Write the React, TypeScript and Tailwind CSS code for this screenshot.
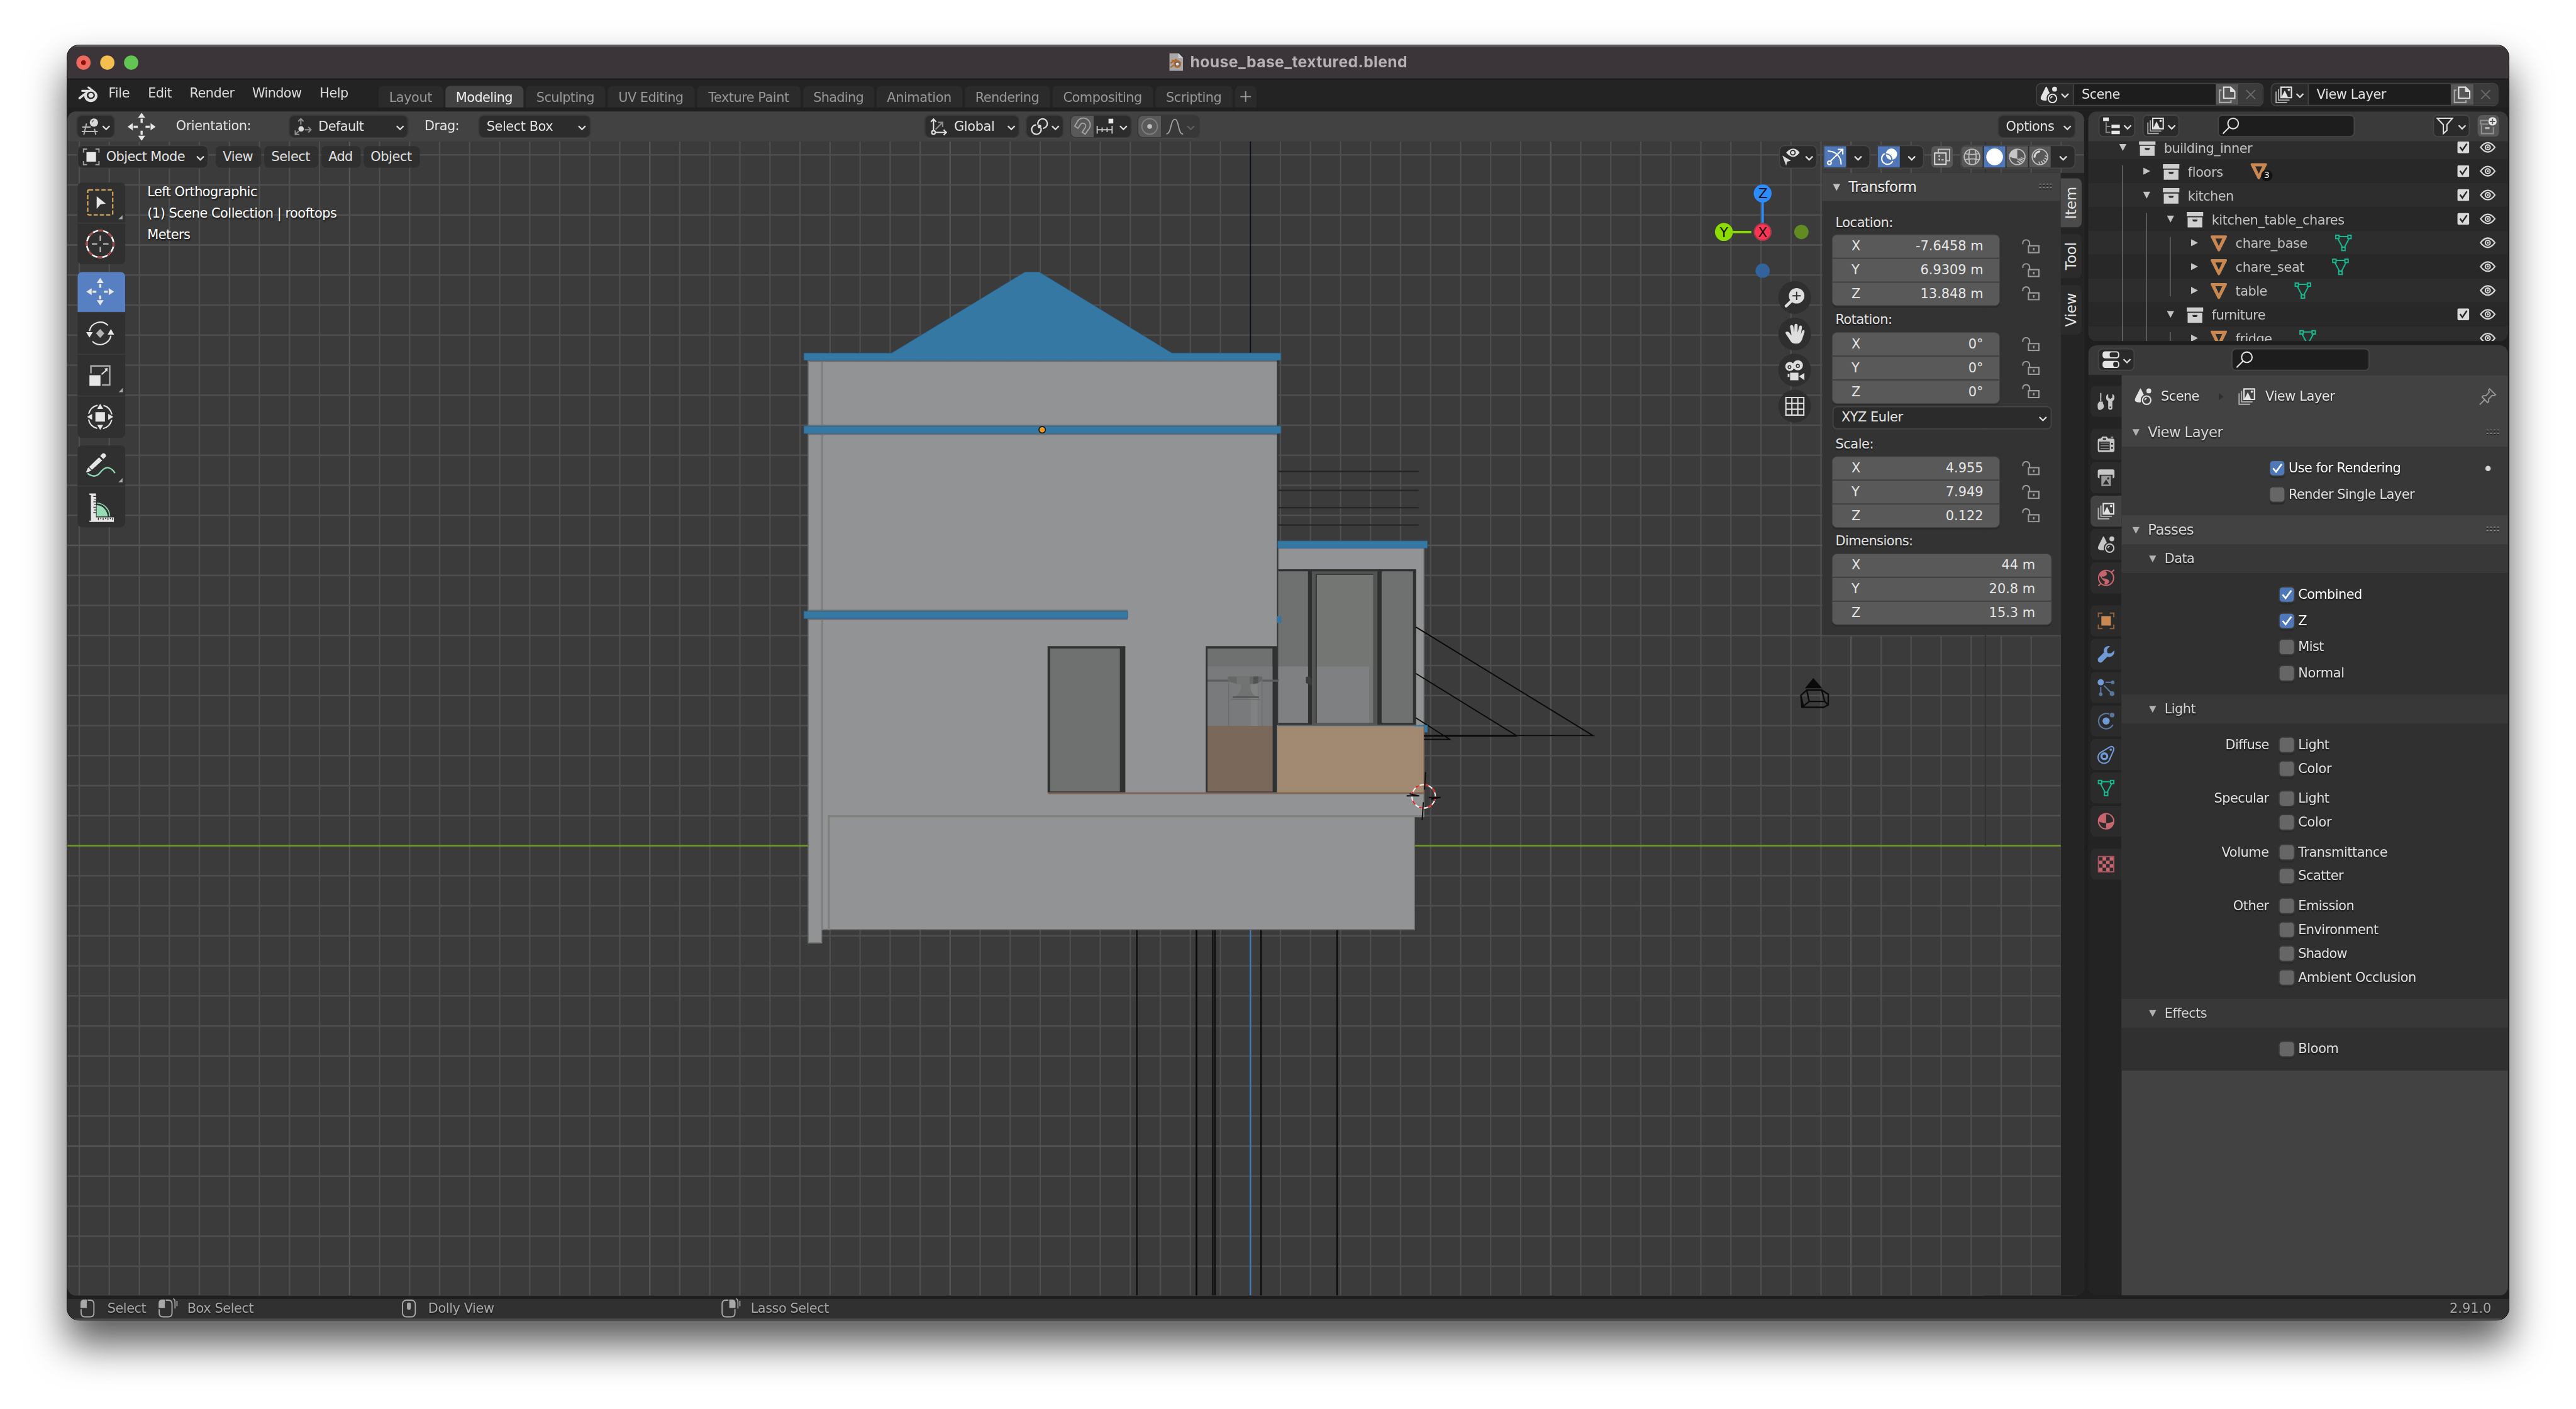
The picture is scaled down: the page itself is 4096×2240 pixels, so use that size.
import React from "react";
import { SiBlender } from "react-icons/si";

/* ---------- text ---------- */

// Glyph advances of the UI face in 1/1000 em; the interface lays glyphs out on whole pixels.
const ADV: Record<string, number> = {
  a: 613, b: 635, c: 550, d: 635, e: 615, f: 352, g: 635, h: 634, i: 278, j: 278, k: 579, l: 278, m: 974,
  n: 634, o: 612, p: 635, q: 635, r: 411, s: 521, t: 392, u: 634, v: 592, w: 818, x: 592, y: 592, z: 525,
  A: 684, B: 686, C: 698, D: 770, E: 632, F: 575, G: 775, H: 752, I: 295, L: 557, M: 863, N: 748, O: 787,
  P: 603, R: 695, S: 635, T: 611, U: 732, V: 684, W: 989, X: 685, Y: 611, Z: 685, " ": 318, _: 500, ":": 337,
};

function Txt({ children, size = 22, className = "" }: { children: string; size?: number; className?: string }) {
  let diff = 0;
  for (const ch of children) {
    const w = ((ADV[ch] ?? 0) * size) / 1000;
    diff += w - Math.floor(w);
  }
  return (
    <span
      className={"whitespace-pre leading-none " + (size === 24 ? "text-[24px] " : "text-[22px] ") + className}
      style={{ letterSpacing: -diff / children.length }}
    >
      {children}
    </span>
  );
}

/* ---------- icons ---------- */

type P = { className?: string };

const Ico = ({ children, c = "#d9d9d9", className = "h-[28px] w-[28px]" }: { children: React.ReactNode; c?: string; className?: string }) => (
  <svg viewBox="0 0 28 28" className={"shrink-0 overflow-visible " + className} fill={c} stroke="none" color={c}>
    {children}
  </svg>
);

const Chevron = ({ className = "", c = "#e0e0e0" }: P & { c?: string }) => (
  <svg viewBox="0 0 14 9" className={"h-[9px] w-[14px] shrink-0 " + className} fill="none" stroke={c} strokeWidth="2.4">
    <path d="M1.2 1.2 7 7 12.8 1.2" />
  </svg>
);

const SceneIcon = ({ c = "#e3e3e3" }) => (
  <Ico c={c}>
    <path d="M8.6 1.2 Q9.6 -.4 10.6 1.2 L15.3 11.2 A10 10 0 0 0 10.4 21.5 Q10.4 23 10 23.6 Q0 24 .2 19.5 Q.4 18 1.4 15.6Z" />
    <circle cx="23.6" cy="4.4" r="4.1" />
    <circle cx="20" cy="20" r="7" fill="none" stroke={c} strokeWidth="2.2" />
    <path d="M17 20a3.2 3.2 0 0 1 3-3" fill="none" stroke={c} strokeWidth="1.8" />
  </Ico>
);

const LayerIcon = ({ c = "#e3e3e3" }) => (
  <Ico c={c}>
    <path d="M9.2 1.2H26.8V18.8H9.2Z" fill="none" stroke={c} strokeWidth="2.2" />
    <path d="M10 18 L15.6 6.5 L21 18Z" />
    <circle cx="22.4" cy="5.6" r="2" />
    <path d="M5.2 4.6V22.8H23.6M1 8.4V26.9H19.4" fill="none" stroke={c} strokeOpacity=".7" strokeWidth="2" />
  </Ico>
);

const CollectionIcon = () => (
  <Ico c="#cfcfcf">
    <path d="M.2 1.4H27.8V8.6H.2Z" />
    <path fillRule="evenodd" d="M1.7 10.5H26.3V27.4H1.7ZM9.8 14.2Q9.8 17.6 12 17.6H16Q18.2 17.6 18.2 14.2Z" />
  </Ico>
);

const ObjMesh = () => (
  <Ico c="#c98852">
    <path fillRule="evenodd" d="M1.5 .6H26.5Q28 1 27.7 3L16 26.2Q14 29 12 26.2L.3 3Q0 1 1.5 .6ZM8.2 6L14 18.4L19.8 6Z" />
  </Ico>
);

const MeshData = () => (
  <Ico c="#16b890">
    <g fill="none" stroke="#16b890" strokeWidth="2.1">
      <path d="M1.1 1.5H6.6V7H1.1ZM21.4 1.5H26.9V7H21.4ZM11.2 21.5H16.8V27H11.2ZM7 3.6H21M4.8 7.5L12 21M23.2 7.5L16 21" />
    </g>
  </Ico>
);

const EyeIcon = () => (
  <Ico c="#d5d5d5" className="h-[26px] w-[26px]">
    <path d="M1.2 14Q7 5.6 14 5.6T26.8 14Q21 22.4 14 22.4T1.2 14Z" fill="none" stroke="#d5d5d5" strokeWidth="2.6" />
    <circle cx="14" cy="14" r="4.4" fill="none" stroke="#d5d5d5" strokeWidth="2.4" />
    <circle cx="14" cy="14" r="2" />
  </Ico>
);

const CopyIcon = () => (
  <Ico c="#e0e0e0">
    <path d="M8.2 1.2H19.8L26.8 8.2V19.8H8.2Z" fill="none" stroke="#e0e0e0" strokeWidth="2.2" />
    <path d="M19 1V9H27Z" />
    <path d="M4.6 6.2H1.2V26.8H20.4V23" fill="none" stroke="#a8a8a8" strokeWidth="2.2" />
  </Ico>
);

const SearchIcon = () => (
  <Ico c="#e0e0e0">
    <circle cx="18" cy="10" r="8.8" fill="none" stroke="#e0e0e0" strokeWidth="2.2" />
    <path d="M11.6 16.4L.8 27.2" stroke="#e0e0e0" strokeWidth="2.2" />
  </Ico>
);

const Lock = () => (
  <svg viewBox="0 0 30 24" className="h-[24px] w-[30px] shrink-0" fill="none" stroke="#9b9b9b" strokeWidth="2.2">
    <path d="M1.2 8.4V6.4A5.6 5.2 0 0 1 12.6 6.4V10.6" />
    <path d="M10.8 11.1H28.3V22.6H10.8Z" />
    <path d="M19.6 14.6V19" strokeWidth="2.6" />
  </svg>
);

const Grip = () => (
  <svg viewBox="0 0 22 11" className="h-[11px] w-[22px] shrink-0">
    {[0, 1, 2, 3].map((i) => (
      <g key={i}>
        <path d={`M${1 + i * 6} 0h3v3h-3zM${1 + i * 6} 6h3v3h-3z`} fill="#9a9a9a" />
        <path d={`M${1 + i * 6} 1.6h3v2h-3zM${1 + i * 6} 7.6h3v2h-3z`} fill="#1a1a1a" />
      </g>
    ))}
  </svg>
);

const TriDown = ({ c = "#b0b0b0" }) => (
  <svg viewBox="0 0 12 12" className="h-[12px] w-[12px] shrink-0"><path d="M0 .5H12L6 12Z" fill={c} /></svg>
);
const TriRight = ({ c = "#c0c0c0" }) => (
  <svg viewBox="0 0 12 12" className="h-[12px] w-[12px] shrink-0"><path d="M.5 0V12L12 6Z" fill={c} /></svg>
);

/* ---------- shared widgets ---------- */

const dd = "flex h-[36px] shrink-0 items-center rounded-[8px] bg-[#2c2c2c] text-[#e4e4e4] shadow-[0_0_0_2px_#3a3a3a,0_3px_1px_#4c4c4c]";
const ddv = "flex h-[36px] shrink-0 items-center text-[#e4e4e4] bg-[#2b2b2b]";

/* ---------- title and top bar ---------- */

function TitleBar() {
  return (
    <div className="flex h-[56px] shrink-0 items-center border-t-2 border-[#6d696c] bg-[#3b3539]">
      <div className="ml-[15px] flex w-[1833px] gap-[16px]">
        <div className="flex h-[24px] w-[24px] items-center justify-center rounded-full bg-[#ee6a5e]">
          <div className="h-[8px] w-[8px] rounded-full bg-[#8b1009]" />
        </div>
        <div className="h-[24px] w-[24px] rounded-full bg-[#f5bf4f]" />
        <div className="h-[24px] w-[24px] rounded-full bg-[#62c554]" />
      </div>
      <svg viewBox="0 0 23 30" className="mr-[12px] mb-[3px] h-[30px] w-[23px]">
        <path d="M0 0H15L23 8V30H0Z" fill="#a9a7a8" />
        <path d="M15 0V8H23Z" fill="#d0cfcf" />
        <circle cx="13.5" cy="18.5" r="5" fill="#3d5a8a" stroke="#b06a2c" strokeWidth="3" />
        <circle cx="13.5" cy="18.5" r="2.6" fill="#e8e8e8" />
        <path d="M2 17L12 10M4 12.5H14M2 24L9 19" stroke="#b06a2c" strokeWidth="2.4" />
      </svg>
      <span className="mb-[3px] font-[Inter] text-[26px] leading-none font-bold tracking-[0.45px] text-[#b5b1b4]">house_base_textured.blend</span>
    </div>
  );
}

const TABS: [string, string][] = [
  ["Layout", "w-[108px]"], ["Modeling", "w-[131px]"], ["Sculpting", "w-[133px]"], ["UV Editing", "w-[146px]"],
  ["Texture Paint", "w-[174px]"], ["Shading", "w-[119px]"], ["Animation", "w-[144px]"], ["Rendering", "w-[143px]"],
  ["Compositing", "w-[169px]"], ["Scripting", "w-[129px]"],
];

function IdField({ icon, label }: { icon: React.ReactNode; label: string }) {
  return (
    <div className="flex h-[39px] w-[382px] items-stretch overflow-hidden rounded-[9px] border-2 border-[#414141] bg-[#1d1d1d]">
      <div className="flex w-[62px] items-center border-r-2 border-[#414141] bg-[#2a2a2a] pl-[6px]">
        {icon}
        <Chevron className="mt-[4px] ml-[6px]" />
      </div>
      <div className="flex w-[238px] items-center pl-[13px] text-[#e4e4e4]"><Txt>{label}</Txt></div>
      <div className="flex w-[38px] items-center justify-center bg-[#575757]"><CopyIcon /></div>
      <div className="flex flex-1 items-center justify-center bg-[#3b3b3b]">
        <svg viewBox="0 0 18 18" className="h-[17px] w-[17px]" stroke="#6b6b6b" strokeWidth="2"><path d="M1 1L17 17M17 1L1 17" /></svg>
      </div>
    </div>
  );
}

function TopBar() {
  return (
    <div className="flex h-[54px] shrink-0 border-b-[7px] border-[#1f1f1f] bg-[#232323]">
      <div className="flex h-[50px] items-center text-[#dcdcdc]">
        <SiBlender className="mr-[18px] ml-[18px] h-[32px] w-[33px] text-[#e0e0e0]" />
        <div className="w-[66px]"><Txt>File</Txt></div>
        <div className="w-[70px]"><Txt>Edit</Txt></div>
        <div className="w-[105px]"><Txt>Render</Txt></div>
        <div className="w-[113px]"><Txt>Window</Txt></div>
        <div className="w-[99px]"><Txt>Help</Txt></div>
      </div>
      <div className="mt-[11px] flex gap-[4px]">
        {TABS.map(([t, w]) => (
          <div
            key={t}
            className={
              "flex h-[36px] items-center justify-center rounded-t-[8px] pt-[3px] pr-[1px] " + w +
              (t === "Modeling" ? " bg-[#424242] text-[#f2f2f2]" : " bg-[#2b2b2b] text-[#989898]")
            }
          >
            <Txt>{t}</Txt>
          </div>
        ))}
        <div className="flex h-[36px] w-[36px] items-center justify-center rounded-t-[8px] bg-[#2b2b2b]">
          <svg viewBox="0 0 18 18" className="h-[18px] w-[18px]" stroke="#989898" strokeWidth="2"><path d="M9 0V18M0 9H18" /></svg>
        </div>
      </div>
      <div className="mt-[6px] mr-[17px] ml-auto flex gap-[12px]">
        <IdField icon={<SceneIcon />} label="Scene" />
        <IdField icon={<LayerIcon />} label="View Layer" />
      </div>
    </div>
  );
}

/* ---------- 3D viewport ---------- */

function ToolHeader() {
  return (
    <div className="flex h-[50px] shrink-0 items-center rounded-t-[14px] bg-[#424242] text-[#e4e4e4]">
      <div className={dd + " ml-[17px] w-[61px] pl-[7px]"}>
        <Ico>
          <g fill="none" stroke="#b9b9b9" strokeWidth="2">
            <path d="M1 15H15M0 22.5H27M8 9L3.6 28M21.4 18L23.6 28" />
          </g>
          <circle cx="20.5" cy="7.5" r="7" />
          <path d="M17.4 7A3.4 3.4 0 0 1 20 4" stroke="#555" strokeWidth="1.6" fill="none" />
        </Ico>
        <Chevron className="mt-[4px] ml-[6px]" />
      </div>
      <svg viewBox="-23.5 -23.5 47 47" className="ml-[23px] h-[47px] w-[47px]" fill="#e6e6e6">
        {[0, 90, 180, 270].map((a) => (
          <path key={a} transform={`rotate(${a})`} d="M23.5 0L15 -6V6ZM13.5 -1.8H6.5V1.8H13.5Z" />
        ))}
      </svg>
      <div className="ml-[34px] w-[191px]"><Txt>Orientation:</Txt></div>
      <div className={dd + " w-[197px] pl-[8px]"}>
        <Ico>
          <circle cx="11" cy="18" r="4.6" />
          <g fill="none" stroke="#8f8f8f" strokeWidth="2.2"><path d="M10.5 1V11M6 5.5L10.5 1L15 5.5M17 19.5H27.5M23 15L27.5 19.5L23 24M7 22L1.6 27M1.2 20.5V27.4H8" /></g>
        </Ico>
        <Txt className="ml-[12px]">Default</Txt>
        <Chevron className="mt-[4px] mr-[5px] ml-auto" />
      </div>
      <div className="ml-[29px] w-[92px]"><Txt>Drag:</Txt></div>
      <div className={dd + " w-[185px] pl-[12px]"}>
        <Txt>Select Box</Txt>
        <Chevron className="mt-[4px] mr-[6px] ml-auto" />
      </div>

      <div className={dd + " ml-[563px] w-[156px] pl-[8px]"}>
        <Ico>
          <g fill="none" stroke="#e0e0e0" strokeWidth="2.2">
            <path d="M5.5 22V2M1 6.5L5.5 1.6L10 6.5M8 24H27M22.5 19.5L27 24L22.5 28.5" />
            <circle cx="5.5" cy="24" r="3" />
            <path d="M9 19L20 8M13 7.2H20.8V15" stroke="#8f8f8f" />
          </g>
        </Ico>
        <Txt className="ml-[12px]">Global</Txt>
        <Chevron className="mt-[4px] mr-[5px] ml-auto" />
      </div>
      <div className={dd + " ml-[14px] w-[60px] pl-[7px]"}>
        <Ico>
          <g fill="none" stroke="#e0e0e0" strokeWidth="2.3">
            <path d="M11.6 11A8 8 0 1 1 20 17.2" />
            <path d="M16.6 16.5A8 8 0 1 1 8.6 11.2" />
          </g>
          <circle cx="14.2" cy="14" r="3" />
        </Ico>
        <Chevron className="mt-[4px] ml-[6px]" />
      </div>
      <div className={dd + " ml-[14px] w-[100px] overflow-hidden"}>
        <div className="flex h-[36px] w-[38px] items-center justify-center bg-[#595959]">
          <Ico>
            <path d="M1.2 13.5L5 7.500A11.500 11.500 0 1 1 24 19.500L18.800 27L13.800 23.600L19 15.800A4.600 4.600 0 1 0 11 10.800L6.800 17.200Z" fill="none" stroke="#a2a2a2" strokeWidth="2" />
          </Ico>
        </div>
        <Ico className="ml-[5px] h-[28px] w-[28px]">
          <path d="M20 1H28V9H20Z" fill="#e6e6e6" />
          <path d="M1 13V26M26 13V26M1 19.5H26M9.3 15.5V23.5M17.6 15.5V23.5" stroke="#c4c4c4" strokeWidth="2" />
        </Ico>
        <Chevron className="mt-[4px] ml-[10px]" />
      </div>
      <div className={dd + " ml-[13px] w-[101px] overflow-hidden"}>
        <div className="flex h-[36px] w-[38px] items-center justify-center bg-[#595959]">
          <Ico>
            <circle cx="14" cy="14" r="13" fill="none" stroke="#7d7d7d" strokeWidth="2" />
            <circle cx="14" cy="14" r="4" fill="#c0c0c0" />
          </Ico>
        </div>
        <div className="flex h-full flex-1 items-center bg-[#383838] pl-[9px]">
          <Ico><path d="M0 26.5Q5 26.5 7.5 14.5T14 2T20.5 14.5T28 26.5" fill="none" stroke="#a0a0a0" strokeWidth="2" /></Ico>
          <Chevron className="mt-[4px] ml-[6px]" c="#5e5e5e" />
        </div>
      </div>
      <div className={dd + " mr-[16px] ml-auto w-[127px] pl-[12px]"}>
        <Txt>Options</Txt>
        <Chevron className="mt-[4px] mr-[5px] ml-auto" />
      </div>
    </div>
  );
}

const OX = 2097, OY = 1418, STEP = 50.36;

function SceneDrawing() {
  const lines: React.ReactNode[] = [];
  for (let k = -39; k <= 27; k++) {
    if (k === 0) continue;
    lines.push(<path key={"v" + k} d={`M${OX + k * STEP} 237V2172`} stroke={k % 10 === 0 ? "#555555" : "#4e4e4e"} />);
  }
  for (let k = -23; k <= 14; k++) {
    if (k === 0) continue;
    lines.push(<path key={"h" + k} d={`M113 ${OY + k * STEP}H3495`} stroke={k % 10 === 0 ? "#555555" : "#4e4e4e"} />);
  }
  return (
    <svg viewBox="113 237 3382 1935" className="absolute inset-0 h-full w-full">
      <rect x="113" y="237" width="3382" height="1935" fill="#3b3b3b" />
      <g strokeWidth="2.5">{lines}</g>
      <path d="M113 1418H3495" stroke="#6f9a25" strokeWidth="2.8" />
      <path d="M3329.5 237V1418" stroke="#323232" strokeWidth="2" />
      <path d="M2097 237V592" stroke="#08101c" strokeWidth="2" />
      <path d="M2097 1558V2172" stroke="#4478b6" strokeWidth="2.6" />
      <path d="M1906.6 1558V2172M2034 1558V2172M2037.5 1558V2172M2114.7 1558V2172M2242.3 1558V2172" stroke="#060606" strokeWidth="2.1" />
      <path d="M2006.5 1558V2172" stroke="#060606" strokeWidth="2.8" />

      {/* walls */}
      <path d="M1355 604H2142.5V919H2388.5V1369H2372.7V1559H1378.6V1581.6H1355Z" fill="#929395" />
      <path d="M1355.5 604V1581H1378V1558.5H2372V1369H2388V919" fill="none" stroke="#6f7170" strokeWidth="1.6" />
      <path d="M1378.8 604V1559" stroke="#7f8180" strokeWidth="3.6" />
      <path d="M1390 1559V1368.5H2388" stroke="#7f817e" strokeWidth="3.4" fill="none" />
      <path d="M1355 605.5H2142M1355 713.5H2142M1355 728.5H2142M1355 1023.5H1891M1355 1038.5H1891" stroke="#6d7173" strokeWidth="2.4" />

      {/* thin shelves */}
      <path d="M2143 790.5H2379M2143 822.2H2379M2143 851.3H2379M2143 880.3H2379" stroke="#262626" strokeWidth="2.4" />
      <path d="M2142.6 604V1216" stroke="#333535" strokeWidth="2.4" />

      {/* roofs */}
      <path d="M1718.8 456.2H1742.9L1965.2 592H2148.2V604H1348.2V592H1495.5Z" fill="#3578a4" stroke="#2b5f82" strokeWidth="1" />
      <path d="M1348.2 714.6H2148.2V726.8H1348.2ZM1348.2 1025H1891V1037H1348.2ZM2143 907H2393.7V919H2143Z" fill="#3578a4" stroke="#2b6189" strokeWidth="1" />

      {/* upper right windows */}
      <path d="M2143.7 954.4H2375V1215.5H2143.7Z" fill="#2e302f" />
      <path d="M2143.7 958H2193.5V1212H2143.7Z" fill="#6e716f" />
      <path d="M2200 958H2310V1215.5H2200Z" fill="#525352" />
      <path d="M2208 963H2302.7V1212H2208Z" fill="#747674" />
      <path d="M2317 958H2369.6V1212H2317Z" fill="#6e716f" />
      <path d="M2143.7 1117.4H2193.5V1212H2143.7ZM2208 1117.4H2296V1212H2208Z" fill="#7f8082" />
      <path d="M2208 963H2302.7" stroke="#3a3b3b" strokeWidth="2" />
      <path d="M2207.2 963V1212" stroke="#202120" strokeWidth="1.6" />
      <path d="M2190 1135l6 -1 4 5v10l-10 -4Z" fill="#3a3b3b" />
      <path d="M2142 1033H2149V1044.6H2142Z" fill="#3578a4" />
      <path d="M2143 1216.5H2372" stroke="#5c666d" strokeWidth="2.4" />

      {/* left window */}
      <path d="M1756.8 1083.4H1887.2V1329H1756.8Z" fill="#2f3130" />
      <path d="M1761 1087.5H1878V1327H1761Z" fill="#6f7170" />

      {/* middle window */}
      <path d="M2022 1083.4H2141.5V1329H2022Z" fill="#2f3130" />
      <path d="M2025 1087.5H2134V1327H2025Z" fill="#6f7170" />
      <path d="M2025 1117.4H2134V1217H2025Z" fill="#797a7c" />
      <path d="M2025 1139.5H2060V1143H2025ZM2117 1139.5H2146L2143 1143H2117Z" fill="#5a5d5c" />
      <path d="M2060.5 1135V1217M2116.5 1135V1217" stroke="#6a6c6c" strokeWidth="1.4" />
      <path d="M2098 1147H2109V1217H2098Z" fill="#808282" />
      <path d="M2059 1134.4H2116.5V1142Q2104 1147.6 2088 1147.6T2059 1142Z" fill="#646766" />
      <path d="M2074 1134.4H2096V1147.4H2074Z" fill="#727473" />
      <path d="M2102 1134.4H2110V1145.4L2102 1147Z" fill="#505352" />
      <path d="M2082 1147.5H2096Q2096 1161 2106 1168H2072Q2082 1161 2082 1147.5Z" fill="#717372" />
      <path d="M2067 1167.500H2111V1170.500H2067Z" fill="#555857" />
      <path d="M2065 1172.500H2113" stroke="#686a6a" strokeWidth="1.500" />
      <path d="M2025 1217H2134V1327H2025Z" fill="#7a685b" />

      {/* counter */}
      <path d="M2142.4 1218H2388.4V1329H2142.4Z" fill="#a18a71" />
      <path d="M1757 1330H2388.4" stroke="#7d6657" strokeWidth="3" />
      <path d="M2388 1218V1330" stroke="#80695a" strokeWidth="1.6" />

      {/* lamps */}
      <g fill="none" stroke="#0a0a0a" strokeWidth="2">
        <path d="M2374.5 1051.4L2671.4 1233.3H2388M2374.5 1129.3L2543.8 1233.7M2374.5 1203.6L2431 1239.6H2388" />
        <path d="M2388 1234H2544" strokeWidth="2.8" />
      </g>
      <path d="M2372 1215.5H2394V1228H2389V1218H2372Z" fill="#3578a4" />

      {/* origin point */}
      <circle cx="1747.8" cy="720.7" r="5.4" fill="#f59a23" stroke="#1a1a1a" strokeWidth="1.8" />

      {/* 3D cursor */}
      <circle cx="2387.5" cy="1335.3" r="19.6" fill="none" stroke="#f2f2f2" strokeWidth="2.2" />
      <circle cx="2387.5" cy="1335.3" r="19.6" fill="none" stroke="#e02020" strokeWidth="2.2" strokeDasharray="7.7 7.7" />
      <path d="M2390.5 1294.6L2389 1324M2387 1345L2385 1375M2359 1334.5H2380L2364 1331M2396 1337H2416L2400 1340" fill="none" stroke="#0a0a0a" strokeWidth="2" />

      {/* camera */}
      <g fill="none" stroke="#0a0a0a" strokeWidth="2.4">
        <path d="M3020 1166L3030 1157H3055L3066 1164V1182L3058 1186H3022ZM3020 1166L3024 1183M3030 1157L3034 1176H3060L3055 1157M3034 1176L3022 1186M3060 1176L3066 1182" />
      </g>
      <path d="M3027 1154L3041 1137L3056 1154Z" fill="#0a0a0a" />

      {/* axis gizmo */}
      <path d="M2956 338V374" stroke="#2a8cff" strokeWidth="4" />
      <path d="M2905 389H2937" stroke="#8bdc00" strokeWidth="4" />
      <circle cx="2956" cy="324.4" r="15" fill="#2a8cff" />
      <circle cx="2891" cy="389" r="15" fill="#8bdc00" />
      <circle cx="2956" cy="389" r="14" fill="#ff3653" stroke="#a23a4a" strokeWidth="2.4" />
      <circle cx="3021" cy="389" r="12" fill="#628b22" />
      <circle cx="2956" cy="454" r="12" fill="#33639c" />
      <g fontFamily="DejaVu Sans" fontSize="23" textAnchor="middle" fill="#0b0b0b">
        <text x="2956.5" y="332.6">Z</text>
        <text x="2891" y="397.2">Y</text>
        <text x="2956" y="397.2">X</text>
      </g>

      {/* navigation buttons */}
      <g fill="#2f2f2f">
        {[498.8, 560, 620.6, 681].map((y) => <circle key={y} cx="3009.7" cy={y} r="27.5" />)}
      </g>
      <g fill="#dedede">
        <circle cx="3013" cy="496" r="13" />
        <path d="M3005 504L2995.5 513" stroke="#dedede" strokeWidth="5" strokeLinecap="round" />
        <path d="M3013 489V503M3006 496H3020" stroke="#2f2f2f" strokeWidth="2" />
        <path d="M2995 560q-2 -4 2 -4q4 0 6 5l1.500 1 -2.500 -14q0 -3 2.500 -3t3 3l1.500 10 .4 -12q0 -3 2.600 -3t2.600 3v12l2.600 -10q.5 -2.600 2.800 -2.200t2 3.200l-2 12 2.200 -6q1.300 -2.200 3 -1.500t1 3.500l-4 12q-3 7 -7.500 7h-5q-5 0 -8 -6z" />
        <circle cx="3001.500" cy="614.500" r="7.500" />
        <circle cx="3015" cy="612.500" r="8.500" />
        <path d="M3002 625H3016V637.500H3002ZM3017 631L3026 625.500V637.500ZM2998 627h3v5h-3z" />
      </g>
      <circle cx="3001" cy="615.500" r="2.400" fill="#dedede" stroke="#2f2f2f" strokeWidth="1.600" />
      <circle cx="3015" cy="613.500" r="2.600" fill="#dedede" stroke="#2f2f2f" strokeWidth="1.600" />
      <path d="M2995 666.500H3025V696H2995ZM3005 666.500V696M3015 666.500V696M2995 676.300H3025M2995 686.200H3025" fill="none" stroke="#dedede" strokeWidth="2.200" />
    </svg>
  );
}

const ball = "flex h-[36px] w-[36px] items-center justify-center bg-[#585858]";

function ViewHeader() {
  return (
    <div className="relative flex h-[53px] shrink-0 pt-[8px]">
      <div className={ddv + " ml-[18px] w-[217px] rounded-[8px] pl-[8px] shadow-[0_0_0_2px_#3f3f3f]"}>
        <Ico>
          <path d="M6 6H22V22H6Z" fill="#e6e6e6" />
          <path d="M1 7V1H7M21 1H27V7M27 21V27H21M7 27H1V21" fill="none" stroke="#9f9f9f" strokeWidth="2" />
        </Ico>
        <Txt className="ml-[11px]">Object Mode</Txt>
        <Chevron className="mt-[4px] mr-[5px] ml-auto" />
      </div>
      <div className="ml-[14px] flex h-[36px] gap-[5px] text-[#e0e0e0]">
        {([["View", "w-[76px]"], ["Select", "w-[91px]"], ["Add", "w-[66px]"], ["Object", "w-[94px]"]] as const).map(([t, w]) => (
          <div key={t} className={"flex h-[36px] items-center justify-center rounded-[8px] bg-[#2e2e2e]/85 pr-[2px] " + w}><Txt>{t}</Txt></div>
        ))}
      </div>
      <div className="mr-[16px] ml-auto flex">
        <div className={ddv + " w-[61px] rounded-[8px] pl-[4px] shadow-[0_0_0_2px_#454545]"}>
          <Ico className="h-[30px] w-[30px]">
            <path d="M6 7.500Q11 1 17 1T27 7.500Q22 14 17 14T6 7.500Z" fill="#e0e0e0" />
            <circle cx="16.500" cy="7.500" r="3.600" fill="#e0e0e0" stroke="#2b2b2b" strokeWidth="1.800" />
            <path d="M0 12L13.500 20L7.500 21.500L6 28Z" />
          </Ico>
          <Chevron className="mt-[4px] ml-[8px]" />
        </div>
        <div className={ddv + " ml-[13px] w-[76px] overflow-hidden rounded-r-[8px] shadow-[0_0_0_2px_#454545]"}>
          <div className="flex h-[36px] w-[37px] items-center justify-center bg-[#5078b8]">
            <Ico c="#fff">
              <g fill="none" stroke="#fff" strokeWidth="2.200">
                <path d="M1 4.500A21 21 0 0 1 23.500 27M6 21L26 1.500M18 1.500H26.400V10" />
                <circle cx="4" cy="24" r="3" />
              </g>
            </Ico>
          </div>
          <Chevron className="mt-[4px] ml-[13px]" />
        </div>
        <div className={ddv + " ml-[14px] w-[76px] overflow-hidden rounded-r-[8px] shadow-[0_0_0_2px_#454545]"}>
          <div className="flex h-[36px] w-[37px] items-center justify-center bg-[#5078b8]">
            <Ico c="#fff">
              <circle cx="18" cy="9.500" r="9.500" />
              <path d="M6.500 8.600A9.600 9.600 0 1 0 20 21" fill="none" stroke="#fff" strokeWidth="2.200" />
              <path d="M8.600 9A9.600 9.600 0 0 1 18.700 19" fill="none" stroke="#5078b8" strokeWidth="2" />
            </Ico>
          </div>
          <Chevron className="mt-[4px] ml-[13px]" />
        </div>
        <div className="ml-[14px] flex h-[36px] w-[36px] items-center justify-center rounded-[6px] bg-[#585858]">
          <Ico>
            <g fill="none" stroke="#e0e0e0" strokeWidth="2">
              <path d="M1.500 7.500H20.500V26.500H1.500Z" />
              <path d="M7.500 7V1.500H26.500V20.500H21" stroke="#bdbdbd" />
              <path d="M9 11V19H17" strokeDasharray="3.500 2.500" />
            </g>
          </Ico>
        </div>
        <div className={ddv + " ml-[14px] gap-[2px] overflow-hidden rounded-[8px] shadow-[0_0_0_2px_#454545]"}>
          <div className={ball}>
            <Ico>
              <g fill="none" stroke="#bdbdbd" strokeWidth="1.900">
                <circle cx="14" cy="14" r="13" />
                <path d="M10.500 1.500Q7 14 10.500 26.500M19.500 2.500Q22.500 14 19.500 25.500M2 8.500Q14 11.500 26 8.500M1.500 19Q14 16 26.500 19" />
              </g>
            </Ico>
          </div>
          <div className="flex h-[36px] w-[36px] items-center justify-center bg-[#5078b8]"><Ico><circle cx="14" cy="14" r="14" fill="#fff" /></Ico></div>
          <div className={ball}>
            <Ico>
              <circle cx="14" cy="14" r="13" fill="none" stroke="#bdbdbd" strokeWidth="1.900" />
              <path d="M14 1A13 13 0 0 0 1 14Q7 17 14 17Z" fill="#c6c6c6" />
              <path d="M14 17L23 23M17 17L25 20M20 15.500L26.500 17M14 21L20 25.500" stroke="#bdbdbd" strokeWidth="1.800" />
            </Ico>
          </div>
          <div className={ball}>
            <Ico>
              <circle cx="14" cy="14" r="13" fill="none" stroke="#bdbdbd" strokeWidth="1.900" />
              <path d="M5 14A9.500 9.500 0 0 1 13 5" fill="none" stroke="#d6d6d6" strokeWidth="3.400" strokeLinecap="round" />
              <path d="M12 22L14 26M16 21L19 25.500M19 19L23 22.500M21.500 16L26 18.500M22.500 12L26.500 13.500" stroke="#bdbdbd" strokeWidth="1.800" />
            </Ico>
          </div>
          <div className="flex h-[36px] w-[38px] items-center justify-center"><Chevron className="mt-[4px]" /></div>
        </div>
      </div>
    </div>
  );
}

const Cell = ({ children, active, corner, cls = "" }: { children: React.ReactNode; active?: boolean; corner?: boolean; cls?: string }) => (
  <svg viewBox="0 0 80 68" className={"w-[80px] " + (active ? "bg-[#5680c2] " : "bg-[#303030] ") + cls} fill="#e6e6e6">
    {children}
    {corner && <path d="M76 55.500V62.500H69Z" fill="#a8a8a8" />}
  </svg>
);

function Toolbar() {
  return (
    <div className="mt-[16px] flex w-[80px] flex-col">
      <div className="flex flex-col gap-[2px] overflow-hidden rounded-[8px] bg-[#3a3a3a]">
        <Cell corner cls="h-[67px]">
          <rect x="16.800" y="12.500" width="42.500" height="42.500" rx="2" fill="none" stroke="#d3a556" strokeWidth="2.400" strokeDasharray="7.200 3.400" />
          <path d="M32 23.500L47.500 36L38.500 37L32 45Z" />
        </Cell>
        <Cell cls="h-[68px]">
          <g transform="translate(38 34)" fill="none" strokeWidth="2.800">
            <circle r="22.500" stroke="#fff" />
            <circle r="22.500" stroke="#a84a4a" strokeDasharray="8.830 8.830" strokeDashoffset="4" />
            <path d="M-14 0H-5M5 0H14M0 -14V-5M0 5V14" stroke="#cfcfcf" strokeWidth="1.800" />
          </g>
        </Cell>
      </div>
      <div className="mt-[13px] flex flex-col gap-[2px] overflow-hidden rounded-[8px] bg-[#3a3a3a]">
        <Cell active cls="h-[67px]">
          <g transform="translate(38 33.500)">
            {[0, 90, 180, 270].map((a) => (
              <path key={a} transform={`rotate(${a})`} d="M23.500 0L14.500 -6V6ZM13 -1.900H6.500V1.900H13Z" />
            ))}
          </g>
        </Cell>
        <Cell cls="h-[68px]">
          <g transform="translate(38 34)">
            <path d="M0 -7.500L7 0L0 7.500L-7 0Z" fill="#b4b4b4" />
            <path d="M-18 -4A18.500 18.500 0 0 1 13 -13.500M18 4A18.500 18.500 0 0 1 -13 13.500" fill="none" stroke="#e6e6e6" strokeWidth="2.200" />
            <path d="M-23.500 -2H-12.500L-18 7ZM23.500 2H12.500L18 -7.500Z" />
          </g>
        </Cell>
        <Cell corner cls="h-[68px]">
          <path d="M22.500 31V18.500H54V50.500H41" fill="none" stroke="#a8a8a8" strokeWidth="2.600" />
          <path d="M20 34H38.500V52H20Z" />
          <path d="M39.500 32L47 25.500L45 23L50.500 22L50 28L48.500 27L41 33.500Z" />
        </Cell>
        <Cell cls="h-[69px]">
          <g transform="translate(38 33.500)">
            <circle r="20" fill="none" stroke="#e6e6e6" strokeWidth="2.200" strokeDasharray="21.400 10" strokeDashoffset="-5" />
            {[0, 90, 180, 270].map((a) => <path key={a} transform={`rotate(${a})`} d="M22 0L13.500 -5V5Z" />)}
            <path d="M-8 -8H8V8H-8Z" />
          </g>
        </Cell>
      </div>
      <div className="mt-[13px] flex flex-col gap-[2px] overflow-hidden rounded-[8px] bg-[#3a3a3a]">
        <Cell corner cls="h-[67px]">
          <path d="M14 45L17 38.500L36 20L41.500 25.500L22 43L15 46Z" />
          <path d="M38 18L41.500 14Q44 12 46.500 14.500T47 19.500L43.500 23Z" />
          <path d="M19 37L23.500 42" stroke="#303030" strokeWidth="1.400" />
          <path d="M16.500 47.500Q29 57 38 46T54 38.500Q60 41 63 47" fill="none" stroke="#8fdab4" strokeWidth="2.400" />
        </Cell>
        <Cell cls="h-[68px]">
          <path d="M20 11.500H31V14H31V50H25L31 50V51.500H61V59H20V57H22.500V14H20Z" />
          <path d="M31 16.500H26.500M31 21H28M31 25.500H26.500M31 30H28M31 34.500H26.500M31 39H28M31 43.500H26.500M35 52V56M39 52V54.500M43 52V56M47 52V54.500M51 52V56M55 52V54.500M59 52V56" stroke="#303030" strokeWidth="1.500" />
          <path d="M32 50V31A19.500 19.500 0 0 1 50.500 50Z" fill="#97dcb6" />
          <path d="M32.500 27.500A22.500 22.500 0 0 1 54 50" fill="none" stroke="#8fdab4" strokeWidth="1.800" />
        </Cell>
      </div>
    </div>
  );
}

function Fields({ rows, wide }: { rows: [string, string][]; wide?: boolean }) {
  return (
    <div className="flex">
      <div className={"flex h-[118px] flex-col gap-[2px] overflow-hidden rounded-[8px] bg-[#3f3f3f] shadow-[0_0_0_1px_#444,0_3px_1px_#2b2b2b] " + (wide ? "w-[367px]" : "w-[280px]")}>
        {rows.map(([a, b]) => (
          <div key={a} className="flex flex-1 items-center justify-between bg-[#595959] pr-[27px] pb-[1px] pl-[32px] text-[#e6e6e6]">
            <Txt>{a}</Txt>
            <span className="text-[22px] leading-none">{b}</span>
          </div>
        ))}
      </div>
      {!wide && (
        <div className="ml-[38px] flex flex-col gap-[15.500px] pt-[7px]">
          <Lock /><Lock /><Lock />
        </div>
      )}
    </div>
  );
}

const PLabel = ({ children, cls }: { children: string; cls: string }) => (
  <div className={"flex items-center pl-[5px] text-[#e4e4e4] [text-shadow:0_2px_2px_rgba(0,0,0,.6)] " + cls}><Txt>{children}</Txt></div>
);

function NPanel() {
  return (
    <div className="flex h-[775px] w-[400px] shrink-0 flex-col bg-[#333333]/97">
      <div className="flex h-[47px] shrink-0 items-center bg-[#414141] pr-[15px] pl-[18px] text-[#f0f0f0] [text-shadow:0_2px_2px_rgba(0,0,0,.6)]">
        <TriDown c="#c0c0c0" />
        <Txt size={24} className="ml-[14px]">Transform</Txt>
        <div className="ml-auto"><Grip /></div>
      </div>
      <div className="flex flex-col pl-[17px]">
        <PLabel cls="mt-[16px] h-[41px]">Location:</PLabel>
        <Fields rows={[["X", "-7.6458 m"], ["Y", "6.9309 m"], ["Z", "13.848 m"]]} />
        <PLabel cls="h-[46px] pt-[2px]">Rotation:</PLabel>
        <Fields rows={[["X", "0°"], ["Y", "0°"], ["Z", "0°"]]} />
        <div className="mt-[5px] flex h-[39px] w-[368px] items-center rounded-[8px] border-2 border-[#444444] bg-[#2b2b2b] pr-[6px] pb-[1px] pl-[13px] text-[#e4e4e4]">
          <Txt>XYZ Euler</Txt>
          <Chevron className="mt-[4px] ml-auto" />
        </div>
        <PLabel cls="h-[46px] pt-[3px]">Scale:</PLabel>
        <Fields rows={[["X", "4.955"], ["Y", "7.949"], ["Z", "0.122"]]} />
        <PLabel cls="h-[45px] pt-[1px]">Dimensions:</PLabel>
        <Fields wide rows={[["X", "44 m"], ["Y", "20.8 m"], ["Z", "15.3 m"]]} />
      </div>
    </div>
  );
}

function Viewport() {
  return (
    <div className="flex w-[3382px] shrink-0 flex-col overflow-hidden rounded-[14px] bg-[#3b3b3b]">
      <ToolHeader />
      <div className="relative flex flex-1 flex-col">
        <SceneDrawing />
        <ViewHeader />
        <div className="relative flex flex-1">
          <div className="flex flex-1 pl-[17px]">
            <Toolbar />
            <div className="mt-[14px] ml-[37px] flex flex-col text-white [text-shadow:1px_2px_3px_rgba(0,0,0,.8)]">
              {["Left Orthographic", "(1) Scene Collection | rooftops", "Meters"].map((t) => (
                <div key={t} className="flex h-[36px] items-center"><Txt>{t}</Txt></div>
              ))}
            </div>
          </div>
          <NPanel />
          <div className="flex w-[39px] shrink-0 flex-col bg-[#242424] pt-[9px]">
            {([["Item", "h-[82px] bg-[#4b4b4b]"], ["Tool", "mt-[11px] h-[74px] bg-[#2b2b2b]"], ["View", "mt-[12px] h-[83px] bg-[#2b2b2b]"]] as const).map(([t, c]) => (
              <div key={t} className={"flex w-[35px] items-center justify-center rounded-r-[8px] text-[#e4e4e4] " + c}>
                <span className="rotate-180 text-[24px] leading-none [writing-mode:vertical-rl]">{t}</span>
              </div>
            ))}
          </div>
        </div>
      </div>
    </div>
  );
}

/* ---------- outliner ---------- */

type Row = { d: number; open: boolean; kind: "c" | "o"; t: string; data?: "mesh" | "three" };
const ROWS: Row[] = [
  { d: 0, open: true, kind: "c", t: "building_inner" },
  { d: 1, open: false, kind: "c", t: "floors", data: "three" },
  { d: 1, open: true, kind: "c", t: "kitchen" },
  { d: 2, open: true, kind: "c", t: "kitchen_table_chares" },
  { d: 3, open: false, kind: "o", t: "chare_base", data: "mesh" },
  { d: 3, open: false, kind: "o", t: "chare_seat", data: "mesh" },
  { d: 3, open: false, kind: "o", t: "table", data: "mesh" },
  { d: 2, open: true, kind: "c", t: "furniture" },
  { d: 3, open: false, kind: "o", t: "fridge", data: "mesh" },
];
const INDENT = ["pl-[52px]", "pl-[92px]", "pl-[132px]", "pl-[172px]"];
const hdd = "flex h-[38px] items-center rounded-[8px] border-2 border-[#454545] bg-[#2a2a2a]";

function Outliner() {
  return (
    <div className="flex h-[385px] flex-col overflow-hidden rounded-[14px] bg-[#282828]">
      <div className="flex h-[50px] shrink-0 items-center bg-[#3a3a3a] pb-[2px] pl-[17px]">
        <div className={hdd + " w-[62px] pl-[6px]"}>
          <Ico>
            <path d="M0 0H9.500V6H0ZM14 12H28V18H14ZM14 22H28V28H14Z" fill="#e6e6e6" />
            <path d="M5 8V25H12M5 15H12" fill="none" stroke="#8a8a8a" strokeWidth="2" />
          </Ico>
          <Chevron className="mt-[4px] ml-[6px]" />
        </div>
        <div className={hdd + " ml-[12px] w-[62px] pl-[6px]"}>
          <LayerIcon />
          <Chevron className="mt-[4px] ml-[6px]" />
        </div>
        <div className="ml-[64px] flex h-[38px] w-[230px] items-center rounded-[8px] border-2 border-[#454545] bg-[#1d1d1d] pl-[6px]"><SearchIcon /></div>
        <div className={hdd + " ml-[131px] w-[62px] pl-[4px]"}>
          <Ico><path d="M1.200 1.200H26.800L17.500 12V21.500L11.500 27V12Z" fill="none" stroke="#e0e0e0" strokeWidth="2.200" /></Ico>
          <Chevron className="mt-[4px] ml-[8px]" />
        </div>
        <div className="ml-[13px] flex h-[36px] w-[36px] items-center justify-center rounded-[7px] bg-[#585858]">
          <Ico>
            <path d="M14 5H1V11H14M2.500 13V27H22.500V16" fill="none" stroke="#8f8f8f" strokeWidth="2.200" />
            <path d="M8.500 16H16V19.500H8.500Z" fill="#b5b5b5" />
            <circle cx="21" cy="6.500" r="7" fill="#e6e6e6" />
            <path d="M21 2V11M16.500 6.500H25.500" stroke="#585858" strokeWidth="2" />
          </Ico>
        </div>
      </div>
      <div className="relative flex-1 overflow-hidden">
        <div className="-mt-[10px] flex flex-col">
          {ROWS.map((r, i) => (
            <div key={r.t} className={"flex h-[40px] shrink-0 items-center text-[#c3c3c3] " + INDENT[r.d] + (i % 2 ? " bg-[#282828]" : " bg-[#2d2d2d]")}>
              {r.open ? <TriDown c="#c3c3c3" /> : <TriRight c="#c3c3c3" />}
              <div className="mt-[1px] ml-[21px] flex">{r.kind === "c" ? <CollectionIcon /> : <ObjMesh />}</div>
              <Txt className="mt-[4px] ml-[14px]">{r.t}</Txt>
              {r.data === "mesh" && <div className="ml-[46px] flex"><MeshData /></div>}
              {r.data === "three" && (
                <div className="relative ml-[46px] flex">
                  <ObjMesh />
                  <div className="absolute top-[12px] left-[18px] flex h-[19px] w-[19px] items-center justify-center rounded-full bg-[#121212] text-[15px] leading-none text-white">3</div>
                </div>
              )}
              <div className="mr-[21px] ml-auto flex items-center gap-[18px]">
                {r.kind === "c" && (
                  <svg viewBox="0 0 20 20" className="h-[20px] w-[20px]">
                    <rect width="20" height="20" rx="2.500" fill="#d9d9d9" />
                    <path d="M4.500 9.500L8.500 15L16 4" fill="none" stroke="#262626" strokeWidth="2.600" />
                  </svg>
                )}
                <EyeIcon />
              </div>
            </div>
          ))}
        </div>
        <svg viewBox="0 0 704 335" className="absolute inset-0 h-[335px] w-[704px]" stroke="#6c6c6c" strokeWidth="1.600">
          <path d="M57.500 40V335M97.500 120V335M137.500 160V260M137.500 320V335" />
        </svg>
      </div>
    </div>
  );
}

/* ---------- properties ---------- */

const RED = "#c9656f", BLUE = "#6f9ad3", DBLUE = "#58779f";

const TAB_ICONS: { gap?: boolean; active?: boolean; el: React.ReactNode }[] = [
  {
    el: (
      <Ico c="#c6c6c6">
        <path d="M4 0H6V14H4ZM1.500 14.500H8.500V17Q10.500 20 10.200 23T5 28T-.2 23T1.500 17Z" />
        <path fillRule="evenodd" d="M17.500 1.500V7.500L21 10L24.500 7.500V1.500Q28 3 28 7.500T24.500 13.500V25Q24.500 28 21 28T17.500 25V13.500Q14 12 14 7.500T17.500 1.500ZM20 22.500V25.500H22V22.500Z" />
      </Ico>
    ),
  },
  {
    gap: true,
    el: (
      <Ico c="#c6c6c6">
        <path fillRule="evenodd" d="M5 4.500L7.500 1H15L17.500 4.500H25Q28 4.500 28 7.500V24Q28 27 25 27H3Q0 27 0 24V7.500Q0 4.500 3 4.500ZM8.500 3.800V6.500H14V3.800ZM2.500 9.500V24H20V9.500ZM22.500 11.500V14.500H25.500V11.500ZM22.500 18.500V21.500H25.500V18.500Z" />
        <path d="M4.500 12H18.500M4.500 16.500H18.500M4.500 21H18.500" stroke="#8a8a8a" strokeWidth="1.600" />
        <path d="M22 2H26" stroke="#8a8a8a" strokeWidth="2" />
      </Ico>
    ),
  },
  {
    el: (
      <Ico c="#c6c6c6">
        <path d="M3 0H25Q28 0 28 3V12Q28 15 25 15V9H3V15Q0 15 0 12V3Q0 0 3 0Z" />
        <path fillRule="evenodd" fill="#999" d="M6 10.500H22V28H6ZM8.500 25.500H19.500L14 17ZM18 13.500A1.800 1.800 0 1 0 18 17A1.800 1.800 0 0 0 18 13.500Z" />
      </Ico>
    ),
  },
  { active: true, el: <LayerIcon /> },
  { el: <SceneIcon c="#c6c6c6" /> },
  {
    el: (
      <Ico c={RED}>
        <circle cx="14" cy="14" r="12.600" fill="none" stroke={RED} strokeWidth="2.200" />
        <path d="M1 27.500L5 23.500M23 4.500L27.500 .5" stroke={RED} strokeWidth="2.200" />
        <path d="M3 10Q5 3 13 2.500L15.500 6L14.500 9.500L10 12L6.500 11.500L8 14.500L13 15L18 17.500L19.500 21L14 25.500L11 24L12 20L7.500 16.500Z" />
      </Ico>
    ),
  },
  {
    gap: true,
    el: (
      <Ico c="#c98852">
        <path d="M6 6H22V22H6Z" />
        <path d="M1.100 8V1.100H8M20 1.100H26.900V8M26.900 20V26.900H20M8 26.900H1.100V20" fill="none" stroke="#8e623d" strokeWidth="2.200" />
      </Ico>
    ),
  },
  {
    el: (
      <Ico c={BLUE}>
        <path d="M20.500 .3Q15 -.8 11.800 3Q9 6.500 10.200 11.200L1.200 20.200Q-1.200 23 1 26.500Q4 29.500 7.500 26.800L16.200 18.200Q21 19.500 25 16.200Q28.800 12.500 27.800 7.500L22.500 12.200H17.200L15.800 10.800V5.500Z" />
      </Ico>
    ),
  },
  {
    el: (
      <Ico c={DBLUE}>
        <path d="M5 5H24M5 5V24M6 6L24 24" stroke={DBLUE} strokeWidth="2.200" />
        <circle cx="5" cy="5" r="8" fill="#2b2b2b" />
        <circle cx="5" cy="5" r="5.300" fill={BLUE} />
        <circle cx="25" cy="5" r="3" /><circle cx="5" cy="25" r="3" /><circle cx="24" cy="24" r="4" />
      </Ico>
    ),
  },
  {
    el: (
      <Ico c={BLUE}>
        <circle cx="14" cy="14" r="6" />
        <path d="M19 2.300A12.800 12.800 0 1 0 25.500 20" fill="none" stroke={DBLUE} strokeWidth="2.200" />
        <circle cx="24" cy="4" r="4" fill={DBLUE} />
      </Ico>
    ),
  },
  {
    el: (
      <Ico c={BLUE}>
        <path d="M20 1.600Q24.500 -.5 26.300 2.500Q27.600 4.800 26 8.500L20 22A10 10 0 1 1 5 10.500Z" fill="none" stroke={BLUE} strokeWidth="2.200" />
        <circle cx="11" cy="17" r="4.800" fill="none" stroke={BLUE} strokeWidth="3.600" />
        <circle cx="21.800" cy="6" r="2" />
      </Ico>
    ),
  },
  { el: <MeshData /> },
  {
    el: (
      <Ico c={RED}>
        <circle cx="14" cy="14" r="12.800" fill="none" stroke={RED} strokeWidth="2.200" />
        <path d="M14 1V17Q6 17 1.200 14A12.800 12.800 0 0 1 14 1ZM14 17Q22 17 26.800 14A12.800 12.800 0 0 1 14 27Z" />
      </Ico>
    ),
  },
  {
    gap: true,
    el: (
      <Ico c={RED}>
        <path d="M1.200 1.200H26.800V26.800H1.200Z" fill="none" stroke="#a5545d" strokeWidth="2.200" />
        <path d="M8 2H14V8H8ZM20 2H26V8H20ZM2 8H8V14H2ZM14 8H20V14H14ZM8 14H14V20H8ZM20 14H26V20H20ZM2 20H8V26H2ZM14 20H20V26H14Z" />
      </Ico>
    ),
  },
];

const Check = ({ on, children, cls = "" }: { on?: boolean; children: string; cls?: string }) => (
  <div className={"flex h-[24px] items-center [text-shadow:0_2px_2px_rgba(0,0,0,.6)] " + (on ? "text-[#ffffff] " : "text-[#e2e2e2] ") + cls}>
    <div className={"flex h-[24px] w-[24px] shrink-0 items-center justify-center rounded-[5px] shadow-[0_0_0_2px_#3a3a3a,0_4px_1px_#2a2a2a] " + (on ? "bg-[#4f78b8]" : "bg-[#666666]")}>
      {on && <svg viewBox="0 0 20 20" className="h-[20px] w-[20px]" fill="none" stroke="#fff" strokeWidth="2.800"><path d="M3 10L8 16L17.500 3" /></svg>}
    </div>
    <Txt className="mb-[1px] ml-[7px]">{children}</Txt>
  </div>
);

const Pair = ({ name, opts, cls }: { name: string; opts: string[]; cls: string }) => (
  <div className={"flex text-[#e2e2e2] [text-shadow:0_2px_2px_rgba(0,0,0,.6)] " + cls}>
    <div className="flex h-[24px] w-[247px] items-center justify-end"><Txt className="mb-[1px]">{name}</Txt></div>
    <div className="ml-[18px] flex flex-col gap-[16px]">
      {opts.map((o) => <Check key={o}>{o}</Check>)}
    </div>
  </div>
);

const SubHead = ({ children, cls = "" }: { children: string; cls?: string }) => (
  <div className={"flex h-[48px] shrink-0 items-center bg-[#383838] pl-[46px] text-[#d6d6d6] [text-shadow:0_2px_2px_rgba(0,0,0,.6)] " + cls}>
    <TriDown />
    <Txt className="ml-[14px]">{children}</Txt>
  </div>
);

const Head = ({ children, cls }: { children: string; cls: string }) => (
  <div className={"flex shrink-0 items-center pr-[15px] pl-[18px] text-[#d6d6d6] [text-shadow:0_2px_2px_rgba(0,0,0,.6)] " + cls}>
    <TriDown />
    <Txt size={24} className="ml-[14px]">{children}</Txt>
    <div className="ml-auto"><Grip /></div>
  </div>
);

function Properties() {
  return (
    <div className="flex h-[1593px] flex-col overflow-hidden rounded-[14px] bg-[#232323]">
      <div className="flex h-[50px] shrink-0 items-center bg-[#393939] pb-[2px] pl-[16px]">
        <div className={hdd + " w-[62px] pl-[6px]"}>
          <Ico>
            <rect x="0" y="0" width="28" height="12" rx="4.500" fill="#e3e3e3" />
            <rect x="12" y="2" width="14" height="8" rx="3" fill="#2a2a2a" />
            <rect x="0" y="16" width="28" height="12" rx="4.500" fill="#e3e3e3" />
            <rect x="18" y="18" width="8" height="8" rx="3" fill="#2a2a2a" />
          </Ico>
          <Chevron className="mt-[4px] ml-[6px]" />
        </div>
        <div className="ml-[162px] flex h-[38px] w-[232px] items-center rounded-[8px] border-2 border-[#454545] bg-[#1d1d1d] pl-[6px]"><SearchIcon /></div>
      </div>
      <div className="flex flex-1">
        <div className="flex w-[56px] shrink-0 flex-col gap-[4px] bg-[#232323] pt-[18px] pl-[4px]">
          {TAB_ICONS.map((t, i) => (
            <div key={i} className={"flex h-[52px] w-[52px] items-center justify-center rounded-l-[8px] " + (t.gap ? "mt-[16px] " : "") + (t.active ? "bg-[#424242]" : "bg-[#2b2b2b]")}>{t.el}</div>
          ))}
        </div>
        <div className="flex flex-1 flex-col bg-[#424242]">
          <div className="flex h-[72px] shrink-0 items-center pr-[20px] pl-[22px] text-[#e6e6e6] [text-shadow:0_2px_2px_rgba(0,0,0,.6)]">
            <SceneIcon />
            <Txt className="ml-[16px]">Scene</Txt>
            <svg viewBox="0 0 8 12" className="ml-[33px] h-[12px] w-[8px]"><path d="M0 0L8 6L0 12Z" fill="#2e2e2e" /></svg>
            <div className="ml-[25px] flex"><LayerIcon /></div>
            <Txt className="ml-[17px]">View Layer</Txt>
            <div className="ml-auto flex">
              <Ico>
                <path d="M17 1L27 11L24.500 12.500L21.500 12L15.500 18L15.500 22.500L13.500 24L4.500 14.500L6.500 12.500L11 12.500L16.500 6.500L15.500 3ZM9 19L.5 27.500" fill="none" stroke="#9a9a9a" strokeWidth="2" />
              </Ico>
            </div>
          </div>
          <Head cls="h-[48px]">View Layer</Head>
          <div className="flex h-[115px] shrink-0 flex-col gap-[20px] bg-[#383838] pt-[24px] pl-[249px]">
            <div className="flex items-center justify-between pr-[29px]">
              <Check on>Use for Rendering</Check>
              <div className="h-[9px] w-[9px] rounded-full bg-[#d6d6d6]" />
            </div>
            <Check>Render Single Layer</Check>
          </div>
          <Head cls="h-[49px]">Passes</Head>
          <SubHead>Data</SubHead>
          <div className="flex h-[204px] shrink-0 flex-col gap-[20px] bg-[#303030] pt-[24px] pl-[265px]">
            <Check on>Combined</Check>
            <Check on>Z</Check>
            <Check>Mist</Check>
            <Check>Normal</Check>
          </div>
          <SubHead>Light</SubHead>
          <div className="flex h-[462px] shrink-0 flex-col bg-[#303030] pt-[24px]">
            <Pair name="Diffuse" opts={["Light", "Color"]} cls="h-[64px]" />
            <Pair name="Specular" opts={["Light", "Color"]} cls="mt-[26px] h-[64px]" />
            <Pair name="Volume" opts={["Transmittance", "Scatter"]} cls="mt-[26px] h-[64px]" />
            <Pair name="Other" opts={["Emission", "Environment", "Shadow", "Ambient Occlusion"]} cls="mt-[26px]" />
          </div>
          <SubHead>Effects</SubHead>
          <div className="h-[72px] shrink-0 bg-[#303030] pt-[24px] pl-[265px]"><Check>Bloom</Check></div>
        </div>
      </div>
    </div>
  );
}

/* ---------- status bar ---------- */

const Mouse = ({ part, drag }: { part: "l" | "m" | "r"; drag?: boolean }) => (
  <svg viewBox="0 0 32 30" className="h-[30px] w-[32px] shrink-0 overflow-visible" fill="none" stroke="#a8a8a8" strokeWidth="2">
    {part === "m" && <><rect x="1" y="1" width="21.500" height="28" rx="6.500" /><rect x="8.500" y="5" width="6.500" height="12" rx="3" fill="#a8a8a8" stroke="none" /></>}
    {part === "l" && <><path d="M12 1H16Q22.500 1 22.500 7.500V22.500Q22.500 29 16 29H7.500Q1 29 1 22.500V16" /><path d="M0 14V6Q0 0 6 0H10.500V14Z" fill="#a8a8a8" stroke="none" /></>}
    {part === "r" && <><path d="M11.500 1H7.500Q1 1 1 7.500V22.500Q1 29 7.500 29H16Q22.500 29 22.500 22.500V16" /><path d="M23.500 14V6Q23.500 0 17.500 0H13V14Z" fill="#a8a8a8" stroke="none" /></>}
    {drag && <path d="M24.500 -1.500Q27.500 0 27.500 5V15M30.800 2V11" strokeWidth="1.800" />}
  </svg>
);

function StatusBar() {
  return (
    <div className="flex h-[35px] shrink-0 items-center border-b-2 border-[#555555] bg-[#303030] pb-[2px] text-[#a8a8a8] [text-shadow:0_2px_2px_rgba(0,0,0,.6)]">
      <div className="ml-[22px] flex w-[131px] items-center gap-[13px]"><Mouse part="l" /><Txt>Select</Txt></div>
      <div className="flex w-[408px] items-center gap-[16px]"><Mouse part="l" drag /><Txt>Box Select</Txt></div>
      <div className="flex w-[536px] items-center gap-[12px]"><Mouse part="m" /><Txt>Dolly View</Txt></div>
      <div className="flex items-center gap-[17px]"><Mouse part="r" drag /><Txt>Lasso Select</Txt></div>
      <span className="mr-[29px] ml-auto text-[22px] leading-none">2.91.0</span>
    </div>
  );
}

export default function App() {
  return (
    <div className="h-[2240px] w-[4096px] overflow-hidden bg-white">
      <div className="flex h-[2363px] w-[4320px] origin-top-left scale-[0.948148] flex-col pt-[75px] pl-[112px] font-['DejaVu_Sans',sans-serif]">
        <div className="flex h-[2139px] w-[4096px] shrink-0 flex-col overflow-hidden rounded-[20px] border border-black bg-[#1f1f1f] shadow-[0_39px_66px_rgba(0,0,0,.65)]">
          <TitleBar />
          <div className="h-px shrink-0 bg-black" />
          <TopBar />
          <div className="flex h-[1985px] shrink-0">
            <Viewport />
            <div className="ml-[7px] flex w-[704px] shrink-0 flex-col gap-[7px]">
              <Outliner />
              <Properties />
            </div>
          </div>
          <div className="h-[6px] shrink-0" />
          <StatusBar />
        </div>
      </div>
    </div>
  );
}
